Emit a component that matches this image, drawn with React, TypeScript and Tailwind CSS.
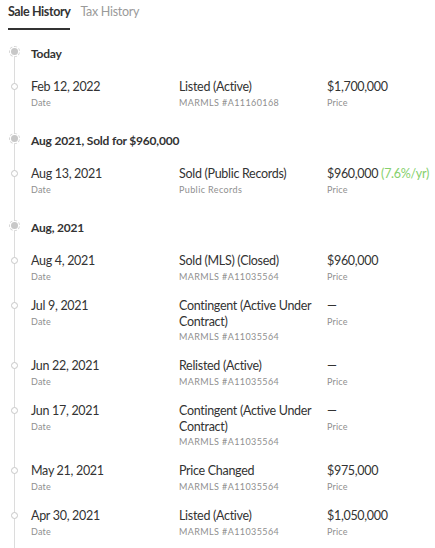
import React from 'react';

type Event = {
  date: string;
  event: string;
  source: string;
  price: string;
  change?: string;
};

type Group = { title: string; events: Event[] };

const groups: Group[] = [
  {
    title: 'Today',
    events: [{ date: 'Feb 12, 2022', event: 'Listed (Active)', source: 'MARMLS #A11160168', price: '$1,700,000' }],
  },
  {
    title: 'Aug 2021, Sold for $960,000',
    events: [
      { date: 'Aug 13, 2021', event: 'Sold (Public Records)', source: 'Public Records', price: '$960,000', change: '(7.6%/yr)' },
    ],
  },
  {
    title: 'Aug, 2021',
    events: [
      { date: 'Aug 4, 2021', event: 'Sold (MLS) (Closed)', source: 'MARMLS #A11035564', price: '$960,000' },
      { date: 'Jul 9, 2021', event: 'Contingent (Active Under Contract)', source: 'MARMLS #A11035564', price: '—' },
      { date: 'Jun 22, 2021', event: 'Relisted (Active)', source: 'MARMLS #A11035564', price: '—' },
      { date: 'Jun 17, 2021', event: 'Contingent (Active Under Contract)', source: 'MARMLS #A11035564', price: '—' },
      { date: 'May 21, 2021', event: 'Price Changed', source: 'MARMLS #A11035564', price: '$975,000' },
      { date: 'Apr 30, 2021', event: 'Listed (Active)', source: 'MARMLS #A11035564', price: '$1,050,000' },
    ],
  },
];

const EventRow: React.FC<{ ev: Event }> = ({ ev }) => (
  <div className="relative flex pl-[31px] pb-[15px]">
    {/* small hollow dot */}
    <span className="absolute left-[11px] top-[4px] h-[7px] w-[7px] rounded-full border border-[#c8c8c8] bg-white" />
    <div className="w-[148px]">
      <div className="text-[12.5px] leading-[16px] tracking-[-0.3px] text-[#333]">{ev.date}</div>
      <div className="mt-[2px] text-[9px] leading-[12px] tracking-[0.2px] text-[#8f8f8f]">Date</div>
    </div>
    <div className="w-[148px] pr-[14px]">
      <div className="text-[12.5px] leading-[15.5px] tracking-[-0.3px] text-[#333]">{ev.event}</div>
      <div className="mt-[2px] text-[9px] leading-[12px] tracking-[0.4px] text-[#8f8f8f]">{ev.source}</div>
    </div>
    <div className="flex-1 whitespace-nowrap">
      <div className="text-[12.5px] leading-[16px] tracking-[-0.3px] text-[#333]">
        {ev.price}
        {ev.change && <span className="text-[#86d06c]"> {ev.change}</span>}
      </div>
      <div className="mt-[2px] text-[9px] leading-[12px] tracking-[0.2px] text-[#8f8f8f]">Price</div>
    </div>
  </div>
);

export default function App() {
  return (
    <div className="min-h-[548px] bg-white font-['Lato',sans-serif] text-[#333]">
      {/* TABS */}
      <div className="flex gap-[10px] px-2 pt-[4px]">
        <div className="border-b-2 border-[#333] pb-[8px] text-[12.5px] font-bold leading-[16px] tracking-[-0.4px]">Sale History</div>
        <div className="text-[12.5px] leading-[16px] tracking-[-0.3px] text-[#9a9a9a]">Tax History</div>
      </div>

      {/* TIMELINE */}
      <div className="relative mt-[14px]">
        <span className="absolute left-[14px] top-[6px] bottom-0 w-px bg-[#dcdcdc]" />
        {groups.map(g => (
          <div key={g.title}>
            <div className="relative flex items-center pl-[31px] pb-[17px] pt-[2px]">
              <span className="absolute left-[9px] top-[2px] flex h-[11px] w-[11px] items-center justify-center rounded-full border border-dashed border-[#d6d6d6] bg-white">
                <span className="h-[7px] w-[7px] rounded-full bg-[#c8c8c8]" />
              </span>
              <span className="text-[12px] font-bold leading-[16px] tracking-[-0.2px] text-[#333]">{g.title}</span>
            </div>
            {g.events.map(ev => (
              <EventRow key={ev.date} ev={ev} />
            ))}
            <div className="h-[7px]" />
          </div>
        ))}
      </div>
    </div>
  );
}
